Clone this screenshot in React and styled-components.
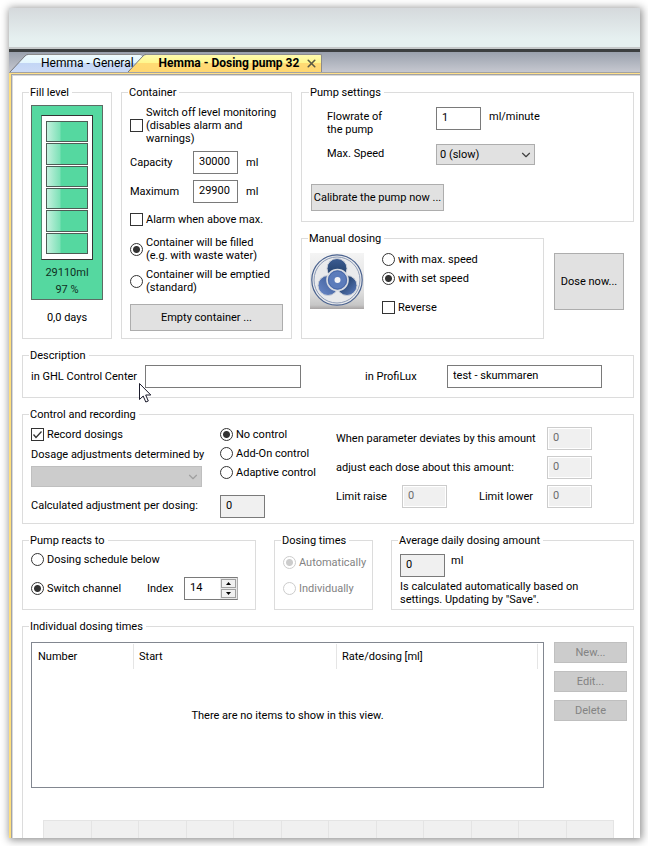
import React, { useState } from 'react';
import styled, { createGlobalStyle } from 'styled-components';
import { ChevronDown, X } from 'lucide-react';

const GlobalStyle = createGlobalStyle`
  *, *::before, *::after {
    box-sizing: border-box;
  }

  body {
    margin: 0;
    background: #ffffff;
  }

  body, button, input, select {
    font-family: Roboto, 'Noto Sans', sans-serif;
    font-size: 11px;
    line-height: 13px;
    color: #000000;
  }
`;

const Page = styled.div`
  height: 100vh;
  padding: 8px 8px 8px 9px;
  overflow: hidden;
`;

const AppWindow = styled.div`
  height: 100%;
  display: flex;
  flex-direction: column;
  background: #ffffff;
  box-shadow: 1px 1px 8px 1px rgba(0, 0, 0, 0.45);
`;

const Ribbon = styled.header`
  flex: none;
  height: 44px;
  background: linear-gradient(#d5d9dc, #e6f0f0 75%, #e6f0f0);
  border-bottom: 3px solid #3c3f40;
  box-shadow: inset 0 -2px 0 #c6c9ca;
`;

const TabBar = styled.nav`
  flex: none;
  display: flex;
  align-items: flex-end;
  height: 20px;
  padding-left: 1px;
  background: linear-gradient(#9aa1ad, #c6c8d0);
`;

const TabButton = styled.button`
  display: flex;
  height: 18px;
  margin-left: ${({ $active }) => ($active ? '-14px' : '0')};
  padding: 0;
  border: 0;
  background: none;
  font-size: 12px;
  font-weight: ${({ $active }) => ($active ? 700 : 400)};
`;

const TabLabel = styled.span`
  display: flex;
  align-items: center;
  gap: 6px;
  height: 18px;
  padding: 0 ${({ $active }) => ($active ? '3px' : '8px')} 0 13px;
  border-top: 1px solid #8c8c8c;
  border-right: ${({ $active }) => ($active ? '1px solid #8c8c8c' : '0')};
  border-radius: 0 2px 0 0;
  white-space: nowrap;
  background: ${({ $active }) =>
    $active
      ? 'linear-gradient(#fffcae, #fff68a 50%, #ffdb74 50%, #ffd772)'
      : 'linear-gradient(#effcff, #e2f5fd 50%, #c3d6f5 50%, #cbdaf6)'};
`;

const Frame = styled.div`
  flex: 1;
  min-height: 0;
  display: flex;
  flex-direction: column;
  margin-top: 1px;
  padding: 1px 0 0 1px;
  border-left: 2px solid #ffdf7c;
  border-top: 1px solid #ffe08a;
  box-shadow: 0 -1px 0 #a3a3a3, inset 1px 1px 0 #a3a3a3;
`;

const Content = styled.main`
  flex: 1;
  min-height: 0;
  overflow: hidden;
  display: flex;
  flex-direction: column;
  gap: 10px;
  padding: 10px 6px 0 9px;
  border-top: 1px solid #d9d9d9;
  border-left: 1px solid #d9d9d9;
`;

const Group = styled.fieldset`
  flex: ${({ $grow }) => ($grow ? 1 : 'none')};
  min-width: 0;
  margin: 0;
  padding: ${({ $padding }) => $padding || '6px 8px 7px'};
  border: 1px solid #dcdcdc;
`;

const Legend = styled.legend`
  height: 13px;
  margin-left: -2px;
  padding: 0 3px 0 1px;
  white-space: nowrap;
`;

const TopRow = styled.div`
  flex: none;
  display: grid;
  grid-template-columns: 90px 171px 1fr;
  gap: 9px;
`;

const Column = styled.div`
  display: flex;
  flex-direction: column;
  gap: ${({ $gap }) => $gap || '10px'};
  min-width: 0;
  padding-top: ${({ $top }) => $top || '0'};
`;

const Row = styled.div`
  display: flex;
  align-items: ${({ $align }) => $align || 'center'};
  gap: ${({ $gap }) => $gap || '8px'};
`;

const Text = styled.span`
  white-space: nowrap;
`;

const FieldLabel = styled.label`
  flex: none;
  width: ${({ $width }) => $width || 'auto'};
  white-space: pre;
`;

const ChoiceLabel = styled.label`
  display: flex;
  align-items: center;
  gap: 3px;
  min-height: 13px;
  white-space: pre;
  color: ${({ $disabled }) => ($disabled ? '#838383' : '#000000')};

  input {
    appearance: none;
    flex: none;
    width: 13px;
    height: 13px;
    margin: 0;
    border: 1px solid #333333;
    background: #ffffff;
  }

  input[type='radio'] {
    border-radius: 50%;
  }

  input[type='radio']:checked {
    background: radial-gradient(circle, #333333 3px, #ffffff 4px);
  }

  input:disabled {
    border-color: #cccccc;
  }

  input[type='radio']:disabled:checked {
    background: radial-gradient(circle, #cccccc 3px, #ffffff 4px);
  }
`;

const CheckBoxFrame = styled.span`
  display: grid;
  flex: none;

  > * {
    grid-area: 1 / 1;
  }

  svg {
    pointer-events: none;
  }
`;

const TextBox = styled.input`
  flex: none;
  width: ${({ $width }) => $width || '45px'};
  height: 23px;
  padding: 0 5px 3px;
  border: 1px solid #7a7a7a;
  background: #ffffff;

  &:read-only {
    background: #f0f0f0;
  }

  &:disabled {
    border-color: #cccccc;
    background: #f0f0f0;
    color: #6d6d6d;
    box-shadow: inset 0 0 0 1px #ffffff;
  }
`;

const PushButton = styled.button`
  flex: none;
  width: ${({ $width }) => $width || 'auto'};
  height: ${({ $height }) => $height || '27px'};
  padding: 0;
  border: 1px solid #adadad;
  background: #e1e1e1;
  white-space: nowrap;

  &:disabled {
    border-color: #bfbfbf;
    background: #cccccc;
    color: #838383;
  }
`;

const SelectFrame = styled.span`
  display: grid;
  align-items: center;
  width: ${({ $width }) => $width};
  height: 21px;
  color: ${({ $disabled }) => ($disabled ? '#9f9f9f' : '#404040')};

  > * {
    grid-area: 1 / 1;
  }

  svg {
    justify-self: end;
    margin-right: 2px;
    pointer-events: none;
  }

  select {
    appearance: none;
    width: 100%;
    height: 21px;
    padding: 0 3px;
    border: 1px solid #adadad;
    border-radius: 0;
    background: #e1e1e1;
  }

  select:disabled {
    border-color: #bfbfbf;
    background: #cccccc;
    opacity: 1;
  }
`;

const TankPanel = styled.div`
  display: flex;
  flex-direction: column;
  align-items: center;
  gap: 4px;
  height: 195px;
  padding: 9px;
  border: 1px solid #5c6b64;
  background: #55d8a0;
  color: #10301f;
`;

const Tank = styled.div`
  flex: none;
  display: flex;
  flex-direction: column;
  gap: 1px;
  width: 52px;
  height: 145px;
  margin-bottom: 2px;
  padding: 5px 4px;
  border: 1px solid #333333;
  border-left-color: #4b8a6f;
  background: #ffffff;
`;

const TankCell = styled.div`
  flex: 1;
  border: 1px solid #4d5c55;
  background: linear-gradient(90deg, #c4f1de, #7de1b7 13px, #55d8a0 14px);
`;

const DayCount = styled.div`
  padding-top: 11px;
  text-align: center;
`;

const PumpForm = styled.div`
  display: grid;
  grid-template-columns: 109px 1fr;
  row-gap: 8px;
  padding: 2px 0 19px 16px;

  > label {
    padding-top: 3px;
  }
`;

const UnitLabel = styled(Text)`
  padding-top: 3px;
`;

const ManualRow = styled.div`
  flex: 1;
  display: flex;
  gap: 10px;
  padding-right: 10px;
`;

const DoseButton = styled(PushButton)`
  width: 70px;
  height: 57px;
  margin-top: 21px;
`;

const DescriptionRow = styled.div`
  position: relative;
  display: flex;
  align-items: center;
  gap: 64px;
`;

const Pointer = styled.svg`
  position: absolute;
  left: 108px;
  top: 18px;
`;

const ControlGrid = styled.div`
  display: grid;
  grid-template-columns: 189px 116px 1fr;
`;

const BottomRow = styled.div`
  flex: none;
  display: grid;
  grid-template-columns: 234px 99px 1fr;
  gap: 18px;
`;

const SwitchRow = styled.div`
  display: grid;
  grid-template-columns: 116px 37px 54px;
  align-items: center;
`;

const Note = styled.p`
  margin: 3px 0 0;
  white-space: pre;
`;

const Spinner = styled.span`
  display: flex;
  height: 23px;
  border: 1px solid #7a7a7a;
  border-right-color: #adadad;

  input {
    width: 35px;
    padding: 0 5px 2px;
    border: 0;
    background: #ffffff;
  }
`;

const SpinButtons = styled.span`
  display: grid;
  grid-template-rows: 1fr 1fr;
  flex: 1;
  gap: 1px;
  padding: 1px;
  background: #e8e8e8;

  button {
    display: grid;
    place-items: center;
    min-height: 0;
    padding: 0;
    border: 1px solid #a0a0a0;
    background: #f0f0f0;
  }
`;

const TimesLayout = styled.div`
  display: flex;
  align-items: flex-start;
  gap: 10px;
`;

const TableFrame = styled.div`
  flex: 1;
  height: 146px;
  padding: 1px;
  border: 1px solid #828790;
`;

const TimesTable = styled.table`
  width: 100%;
  border-collapse: separate;
  border-spacing: 0;
  table-layout: fixed;

  th {
    height: 25px;
    padding: 0 5px;
    border-right: 1px solid #e5e5e5;
    text-align: left;
    font-weight: 400;
  }

  th:last-child {
    border-right: 0;
    padding: 0;
  }

  td {
    height: 92px;
    padding: 0;
    text-align: center;
  }
`;

const Timeline = styled.div`
  display: grid;
  grid-template-columns: repeat(12, 1fr);
  height: 60px;
  margin: 32px 13px 0 12px;
  border-top: 1px solid #e4e4e4;
  border-left: 1px solid #e4e4e4;
`;

const TimeSlot = styled.div`
  border-right: 1px solid #e4e4e4;
  background: #f0f0f0;
`;

const Tab = ({ label, active, closable }) => (
  <TabButton type="button" $active={active}>
    <svg width="18" height="18" aria-hidden="true">
      <defs>
        <linearGradient id={active ? 'tabActive' : 'tabIdle'} x1="0" y1="0" x2="0" y2="1">
          <stop offset="0" stopColor={active ? '#fffcae' : '#effcff'} />
          <stop offset="0.5" stopColor={active ? '#fff68a' : '#e2f5fd'} />
          <stop offset="0.5" stopColor={active ? '#ffdb74' : '#c3d6f5'} />
          <stop offset="1" stopColor={active ? '#ffd772' : '#cbdaf6'} />
        </linearGradient>
      </defs>
      <path
        d="M0 18 L15 2 Q16.5 0.5 18 0.5 V18 Z"
        fill={active ? 'url(#tabActive)' : 'url(#tabIdle)'}
      />
      <path d="M0 18 L15 2 Q16.5 0.5 18 0.5" fill="none" stroke="#77787c" />
    </svg>
    <TabLabel $active={active}>
      {label}
      {closable && <X size={13} color="#5c5a45" strokeWidth={3} />}
    </TabLabel>
  </TabButton>
);

const CheckBox = ({ label, ...props }) => (
  <ChoiceLabel>
    <CheckBoxFrame>
      <input type="checkbox" {...props} />
      {props.defaultChecked && (
        <svg width="13" height="13" viewBox="0 0 13 13">
          <path d="M2.5 6.5 L5 9.5 L10.5 3.5" fill="none" stroke="#333333" strokeWidth="1.3" />
        </svg>
      )}
    </CheckBoxFrame>
    {label}
  </ChoiceLabel>
);

const Radio = ({ label, disabled, ...props }) => (
  <ChoiceLabel $disabled={disabled}>
    <input type="radio" disabled={disabled} {...props} />
    {label}
  </ChoiceLabel>
);

const Select = ({ width, options, disabled, ...props }) => (
  <SelectFrame $width={width} $disabled={disabled}>
    <select disabled={disabled} {...props}>
      {options.map((option) => (
        <option key={option}>{option}</option>
      ))}
    </select>
    <ChevronDown size={14} strokeWidth={2} />
  </SelectFrame>
);

const PumpIcon = () => (
  <svg width="54" height="56" viewBox="0 0 54 56" aria-hidden="true">
    <defs>
      <linearGradient id="plate" x1="0" y1="0" x2="0" y2="1">
        <stop offset="0" stopColor="#f4f4f4" />
        <stop offset="0.7" stopColor="#dedede" />
        <stop offset="0.93" stopColor="#c6c6c6" />
        <stop offset="1" stopColor="#a8a4a4" />
      </linearGradient>
      <linearGradient id="bladeTop" x1="0" y1="0" x2="0" y2="1">
        <stop offset="0" stopColor="#3c5c92" />
        <stop offset="1" stopColor="#1c3a62" />
      </linearGradient>
      <linearGradient id="bladeLeft" x1="0" y1="1" x2="1" y2="0">
        <stop offset="0" stopColor="#6d8bcb" />
        <stop offset="1" stopColor="#36558e" />
      </linearGradient>
      <linearGradient id="bladeRight" x1="0" y1="0" x2="1" y2="1">
        <stop offset="0.2" stopColor="#1c3a62" />
        <stop offset="1" stopColor="#5f7fc2" />
      </linearGradient>
    </defs>
    <rect width="54" height="56" fill="url(#plate)" />
    <circle cx="27" cy="27" r="25.2" fill="#e9eaec" stroke="#4a628f" strokeWidth="1.2" />
    <circle cx="27" cy="27" r="23" fill="none" stroke="#7587a8" strokeWidth="0.8" />
    <circle cx="27" cy="15.5" r="10" fill="url(#bladeTop)" stroke="#c9ced8" />
    <circle cx="18" cy="32.5" r="10" fill="url(#bladeLeft)" stroke="#c9ced8" />
    <circle cx="37" cy="32.5" r="10" fill="url(#bladeRight)" stroke="#c9ced8" />
    <circle cx="27.5" cy="27" r="10.5" fill="#5c7cbb" stroke="#d9dce2" strokeWidth="1.6" />
    <circle cx="27.5" cy="27" r="9" fill="none" stroke="#4a69a8" />
    <circle cx="27.5" cy="27" r="3" fill="#f4f4f6" />
  </svg>
);

const slots = Array.from({ length: 12 }, (_, index) => index);
const cells = Array.from({ length: 6 }, (_, index) => index);

const App = () => {
  const [index, setIndex] = useState(14);

  return (
    <Page>
      <GlobalStyle />
      <AppWindow>
        <Ribbon />
        <TabBar>
          <Tab label="Hemma - General" />
          <Tab label="Hemma - Dosing pump 32" active closable />
        </TabBar>
        <Frame>
          <Content>
            <TopRow>
              <Group>
                <Legend>Fill level</Legend>
                <TankPanel>
                  <Tank>
                    {cells.map((cell) => (
                      <TankCell key={cell} />
                    ))}
                  </Tank>
                  <Text>29110ml</Text>
                  <Text>97 %</Text>
                </TankPanel>
                <DayCount>0,0 days</DayCount>
              </Group>

              <Group>
                <Legend>Container</Legend>
                <Column $top="1px">
                  <Column $gap="6px">
                    <CheckBox label={'Switch off level monitoring\n(disables alarm and\nwarnings)'} />
                    <Row>
                      <FieldLabel htmlFor="capacity" $width="55px">Capacity</FieldLabel>
                      <TextBox id="capacity" defaultValue="30000" />
                      <Text>ml</Text>
                    </Row>
                    <Row>
                      <FieldLabel htmlFor="maximum" $width="55px">Maximum</FieldLabel>
                      <TextBox id="maximum" defaultValue="29900" />
                      <Text>ml</Text>
                    </Row>
                  </Column>
                  <CheckBox label="Alarm when above max." />
                  <Column $gap="6px">
                    <Radio name="direction" label={'Container will be filled\n(e.g. with waste water)'} defaultChecked />
                    <Radio name="direction" label={'Container will be emptied\n(standard)'} />
                  </Column>
                  <PushButton type="button">Empty container ...</PushButton>
                </Column>
              </Group>

              <Column>
                <Group $padding="6px 9px 10px">
                  <Legend>Pump settings</Legend>
                  <PumpForm>
                    <FieldLabel htmlFor="flowrate">{'Flowrate of\nthe pump'}</FieldLabel>
                    <Row $align="flex-start">
                      <TextBox id="flowrate" defaultValue="1" />
                      <UnitLabel>ml/minute</UnitLabel>
                    </Row>
                    <FieldLabel htmlFor="speed">Max. Speed</FieldLabel>
                    <Select id="speed" width="99px" options={['0 (slow)']} />
                  </PumpForm>
                  <PushButton type="button" $width="133px">Calibrate the pump now ...</PushButton>
                </Group>

                <ManualRow>
                  <Group $grow $padding="8px">
                    <Legend>Manual dosing</Legend>
                    <Row $gap="18px" $align="flex-start">
                      <PumpIcon />
                      <Column $gap="16px">
                        <Column $gap="6px">
                          <Radio name="manual" label="with max. speed" />
                          <Radio name="manual" label="with set speed" defaultChecked />
                        </Column>
                        <CheckBox label="Reverse" />
                      </Column>
                    </Row>
                  </Group>
                  <DoseButton type="button">Dose now...</DoseButton>
                </ManualRow>
              </Column>
            </TopRow>

            <Group $padding="3px 8px 9px">
              <Legend>Description</Legend>
              <DescriptionRow>
                <Row $gap="0">
                  <FieldLabel htmlFor="controlCenter" $width="114px">in GHL Control Center</FieldLabel>
                  <TextBox id="controlCenter" $width="156px" />
                </Row>
                <Row $gap="0">
                  <FieldLabel htmlFor="profilux" $width="82px">in ProfiLux</FieldLabel>
                  <TextBox id="profilux" $width="155px" defaultValue="test - skummaren" />
                </Row>
                <Pointer width="13" height="20" viewBox="0 0 13 20" aria-hidden="true">
                  <path
                    d="M0.5 0.5 V16.5 L4.2 13 L6.8 19 L9.3 18 L6.7 12 H11.8 Z"
                    fill="#ffffff"
                    stroke="#1b1b2b"
                  />
                </Pointer>
              </DescriptionRow>
            </Group>

            <Group $padding="6px 8px 5px">
              <Legend>Control and recording</Legend>
              <ControlGrid>
                <Column $gap="12px" $top="1px">
                  <Column $gap="5px">
                    <Column $gap="7px">
                      <CheckBox label="Record dosings" defaultChecked />
                      <FieldLabel htmlFor="source">Dosage adjustments determined by</FieldLabel>
                    </Column>
                    <Select id="source" width="171px" options={['']} disabled />
                  </Column>
                  <FieldLabel htmlFor="calculated">Calculated adjustment per dosing:</FieldLabel>
                </Column>
                <Column $gap="16px" $top="1px">
                  <Column $gap="6px">
                    <Radio name="control" label="No control" defaultChecked />
                    <Radio name="control" label="Add-On control" />
                    <Radio name="control" label="Adaptive control" />
                  </Column>
                  <TextBox id="calculated" value="0" readOnly />
                </Column>
                <Column $gap="6px">
                  <Row>
                    <FieldLabel htmlFor="deviation" $width="203px">When parameter deviates by this amount</FieldLabel>
                    <TextBox id="deviation" defaultValue="0" disabled />
                  </Row>
                  <Row>
                    <FieldLabel htmlFor="adjust" $width="203px">adjust each dose about this amount:</FieldLabel>
                    <TextBox id="adjust" defaultValue="0" disabled />
                  </Row>
                  <Row $gap="32px">
                    <Row>
                      <FieldLabel htmlFor="raise" $width="58px">Limit raise</FieldLabel>
                      <TextBox id="raise" defaultValue="0" disabled />
                    </Row>
                    <Row>
                      <FieldLabel htmlFor="lower" $width="60px">Limit lower</FieldLabel>
                      <TextBox id="lower" defaultValue="0" disabled />
                    </Row>
                  </Row>
                </Column>
              </ControlGrid>
            </Group>

            <BottomRow>
              <Group $padding="6px 8px 9px">
                <Legend>Pump reacts to</Legend>
                <Column $gap="11px">
                  <Radio name="trigger" label="Dosing schedule below" />
                  <SwitchRow>
                    <Radio name="trigger" label="Switch channel" defaultChecked />
                    <FieldLabel htmlFor="index">Index</FieldLabel>
                    <Spinner>
                      <input id="index" value={index} onChange={(e) => setIndex(Number(e.target.value) || 0)} />
                      <SpinButtons>
                        <button type="button" aria-label="Increase" onClick={() => setIndex(index + 1)}>
                          <svg width="5" height="3"><path d="M0 3 L2.5 0 L5 3 Z" /></svg>
                        </button>
                        <button type="button" aria-label="Decrease" onClick={() => setIndex(index - 1)}>
                          <svg width="5" height="3"><path d="M0 0 H5 L2.5 3 Z" /></svg>
                        </button>
                      </SpinButtons>
                    </Spinner>
                  </SwitchRow>
                </Column>
              </Group>

              <Group $padding="9px 8px 8px">
                <Legend>Dosing times</Legend>
                <Column $gap="13px">
                  <Radio name="times" label="Automatically" disabled defaultChecked />
                  <Radio name="times" label="Individually" disabled />
                </Column>
              </Group>

              <Group $padding="7px 8px 3px">
                <Legend>Average daily dosing amount</Legend>
                <Row $gap="6px" $align="flex-start">
                  <TextBox id="average" value="0" readOnly aria-label="Average daily dosing amount" />
                  <Text>ml</Text>
                </Row>
                <Note>{'Is calculated automatically based on\nsettings. Updating by "Save".'}</Note>
              </Group>
            </BottomRow>

            <Group $padding="9px 6px 8px 8px">
              <Legend>Individual dosing times</Legend>
              <TimesLayout>
                <TableFrame>
                  <TimesTable>
                    <colgroup>
                      <col width="101" />
                      <col width="203" />
                      <col />
                      <col width="4" />
                    </colgroup>
                    <thead>
                      <tr>
                        <th>Number</th>
                        <th>Start</th>
                        <th>Rate/dosing [ml]</th>
                        <th aria-hidden="true" />
                      </tr>
                    </thead>
                    <tbody>
                      <tr>
                        <td colSpan={4}>There are no items to show in this view.</td>
                      </tr>
                    </tbody>
                  </TimesTable>
                </TableFrame>
                <Column $gap="8px">
                  <PushButton type="button" $width="73px" $height="21px" disabled>New...</PushButton>
                  <PushButton type="button" $width="73px" $height="21px" disabled>Edit...</PushButton>
                  <PushButton type="button" $width="73px" $height="21px" disabled>Delete</PushButton>
                </Column>
              </TimesLayout>
              <Timeline>
                {slots.map((slot) => (
                  <TimeSlot key={slot} />
                ))}
              </Timeline>
            </Group>
          </Content>
        </Frame>
      </AppWindow>
    </Page>
  );
};

export default App;
